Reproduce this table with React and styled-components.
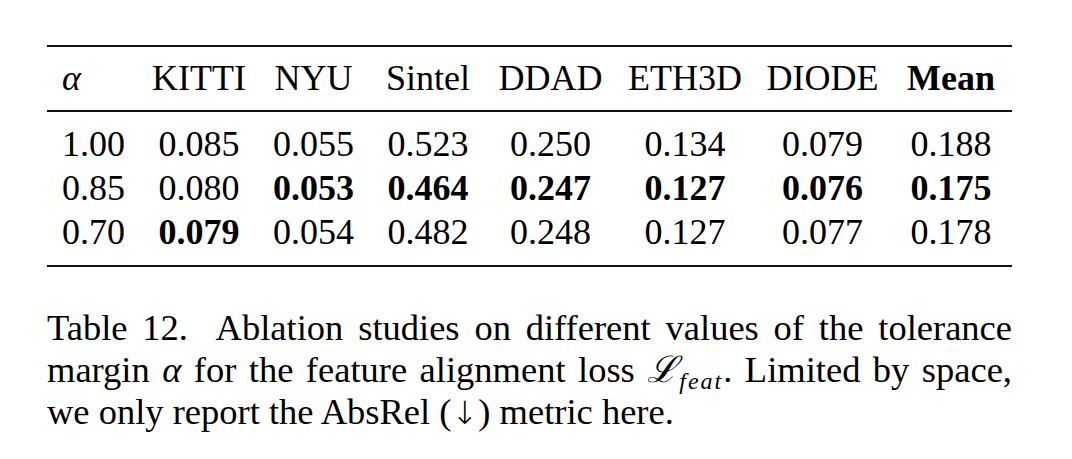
import styled, { createGlobalStyle } from "styled-components";

const GlobalStyle = createGlobalStyle`
  html, body {
    margin: 0;
    padding: 0;
    background: #ffffff;
  }
  body {
    font-family: "Liberation Serif", "Times New Roman", serif;
    color: #000;
  }
`;

const Page = styled.div`
  width: 1072px;
  height: 459px;
  padding: 45px 0 0 47px;
  box-sizing: border-box;
  overflow: hidden;
`;

const Figure = styled.div`
  width: 965px;
`;

const Table = styled.div`
  border-top: 2px solid #111;
  border-bottom: 2px solid #111;
  font-size: 36px;
`;

const Row = styled.div`
  display: grid;
  grid-template-columns: 94px 116px 113px 116px 129px 140px 135px 122px;
  height: 44px;
  line-height: 44px;
  white-space: nowrap;
`;

const Head = styled.div`
  padding: 9px 0 10px;
  border-bottom: 2px solid #111;
`;

const Body = styled.div`
  padding: 10px 0 11px;
`;

const Cell = styled.div`
  text-align: ${(p) => (p.$first ? "left" : "center")};
  padding-left: ${(p) => (p.$first ? "15px" : "0")};
  font-weight: ${(p) => (p.$bold ? 700 : 400)};
`;

const Alpha = styled.i`
  font-style: italic;
`;

const Caption = styled.div`
  margin-top: 40px;
  font-size: 36.5px;
  line-height: 42px;
`;

const Line = styled.div`
  text-align: ${(p) => (p.$last ? "left" : "justify")};
  text-align-last: ${(p) => (p.$last ? "left" : "justify")};
  white-space: nowrap;
`;

const Sub = styled.sub`
  font-style: italic;
  font-size: 24px;
  letter-spacing: 2px;
  vertical-align: -7px;
  line-height: 0;
  margin-left: 2px;
`;

const Script = styled.span`
  font-family: "DejaVu Serif", serif;
  font-style: italic;
`;

const Arrow = styled.span`
  font-family: "DejaVu Sans", sans-serif;
  font-weight: 300;
  font-size: 32px;
`;

const headers = ["KITTI", "NYU", "Sintel", "DDAD", "ETH3D", "DIODE", "Mean"];

const rows = [
  { a: "1.00", v: ["0.085", "0.055", "0.523", "0.250", "0.134", "0.079", "0.188"], b: [] },
  { a: "0.85", v: ["0.080", "0.053", "0.464", "0.247", "0.127", "0.076", "0.175"], b: [1, 2, 3, 4, 5, 6] },
  { a: "0.70", v: ["0.079", "0.054", "0.482", "0.248", "0.127", "0.077", "0.178"], b: [0] },
];

export default function App() {
  return (
    <>
      <GlobalStyle />
      <Page>
        <Figure>
          <Table>
            <Head>
              <Row>
                <Cell $first>
                  <Alpha>α</Alpha>
                </Cell>
                {headers.map((h, i) => (
                  <Cell key={h} $bold={i === headers.length - 1}>
                    {h}
                  </Cell>
                ))}
              </Row>
            </Head>
            <Body>
              {rows.map((r) => (
                <Row key={r.a}>
                  <Cell $first>{r.a}</Cell>
                  {r.v.map((v, i) => (
                    <Cell key={i} $bold={r.b.includes(i)}>
                      {v}
                    </Cell>
                  ))}
                </Row>
              ))}
            </Body>
          </Table>
          <Caption>
            <Line>Table 12.&nbsp; Ablation studies on different values of the tolerance</Line>
            <Line>
              margin <Alpha>α</Alpha> for the feature alignment loss <Script>ℒ</Script>
              <Sub>feat</Sub>. Limited by space,
            </Line>
            <Line $last>
              we only report the AbsRel (<Arrow>↓</Arrow>) metric here.
            </Line>
          </Caption>
        </Figure>
      </Page>
    </>
  );
}
